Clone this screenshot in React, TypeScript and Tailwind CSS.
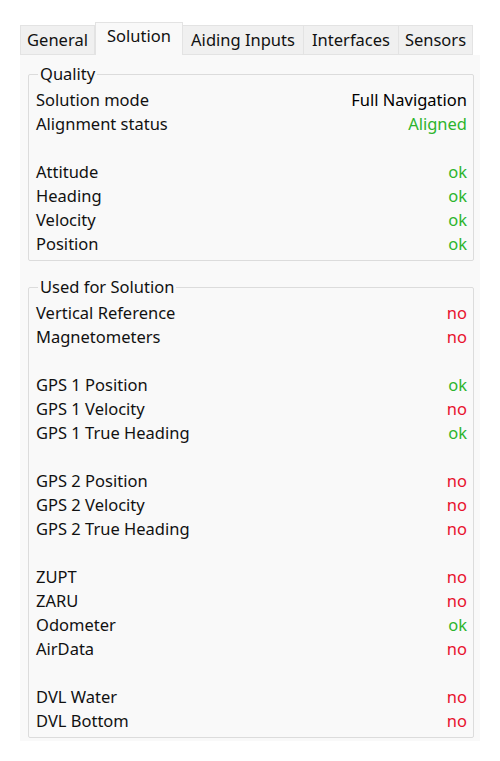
const tabs = [
  { name: "General", w: "w-[75px]" },
  { name: "Solution", w: "w-[88px]", active: true },
  { name: "Aiding Inputs", w: "w-[121px]" },
  { name: "Interfaces", w: "w-[95px]" },
  { name: "Sensors", w: "w-[74px]" }
]

type Row = { label: string; value: string; ok?: boolean } | null

const quality: Row[] = [
  { label: "Solution mode", value: "Full Navigation" },
  { label: "Alignment status", value: "Aligned", ok: true },
  null,
  { label: "Attitude", value: "ok", ok: true },
  { label: "Heading", value: "ok", ok: true },
  { label: "Velocity", value: "ok", ok: true },
  { label: "Position", value: "ok", ok: true }
]

const used: Row[] = [
  { label: "Vertical Reference", value: "no", ok: false },
  { label: "Magnetometers", value: "no", ok: false },
  null,
  { label: "GPS 1 Position", value: "ok", ok: true },
  { label: "GPS 1 Velocity", value: "no", ok: false },
  { label: "GPS 1 True Heading", value: "ok", ok: true },
  null,
  { label: "GPS 2 Position", value: "no", ok: false },
  { label: "GPS 2 Velocity", value: "no", ok: false },
  { label: "GPS 2 True Heading", value: "no", ok: false },
  null,
  { label: "ZUPT", value: "no", ok: false },
  { label: "ZARU", value: "no", ok: false },
  { label: "Odometer", value: "ok", ok: true },
  { label: "AirData", value: "no", ok: false },
  null,
  { label: "DVL Water", value: "no", ok: false },
  { label: "DVL Bottom", value: "no", ok: false }
]

const valueColor = (row: NonNullable<Row>) => {
  if (row.ok === undefined) return "text-black"
  return row.ok ? "text-[#2db42d]" : "text-[#e8112d]"
}

const GroupBox = ({
  title,
  rows,
  className
}: {
  title: string
  rows: Row[]
  className: string
}) => (
  <fieldset
    className={`border border-[#dcdcdc] rounded-[2px] ml-[8px] mr-[6px] pt-[2px] pb-[4px] ${className}`}
  >
    <legend className="ml-[9px] px-[2px] h-[24px] leading-[24px]">
      {title}
    </legend>
    {rows.map((row, i) =>
      row ? (
        <div
          key={i}
          className="flex justify-between h-[24px] leading-[24px] pl-[7px] pr-[6px]"
        >
          <span>{row.label}</span>
          <span className={valueColor(row)}>{row.value}</span>
        </div>
      ) : (
        <div key={i} className="h-[24px]" />
      )
    )}
  </fieldset>
)

export default function App() {
  return (
    <div
      className="w-[500px] h-[761px] bg-white pt-[22px] pl-[20px] text-[16.5px] text-[#111]"
      style={{ fontFamily: '"Noto Sans", "Open Sans", sans-serif' }}
    >
      <div className="w-[460px]">
        {/* Tab strip */}
        <div className="flex items-end h-[33px]">
          {tabs.map((tab) =>
            tab.active ? (
              <div
                key={tab.name}
                className={`${tab.w} h-[33px] bg-[#f9f9f9] border border-b-0 border-[#e3e3e3] flex items-start justify-center leading-[26px]`}
              >
                {tab.name}
              </div>
            ) : (
              <div
                key={tab.name}
                className={`${tab.w} h-[30px] bg-[#f0f0f0] border border-[#e3e3e3] border-l-0 first:border-l flex items-center justify-center leading-[26px]`}
              >
                {tab.name}
              </div>
            )
          )}
        </div>

        {/* Page */}
        <div className="h-[686px] bg-[#f9f9f9] pt-[7px]">
          <GroupBox title="Quality" rows={quality} className="" />
          <GroupBox title="Used for Solution" rows={used} className="mt-[14px]" />
        </div>
      </div>
    </div>
  )
}
